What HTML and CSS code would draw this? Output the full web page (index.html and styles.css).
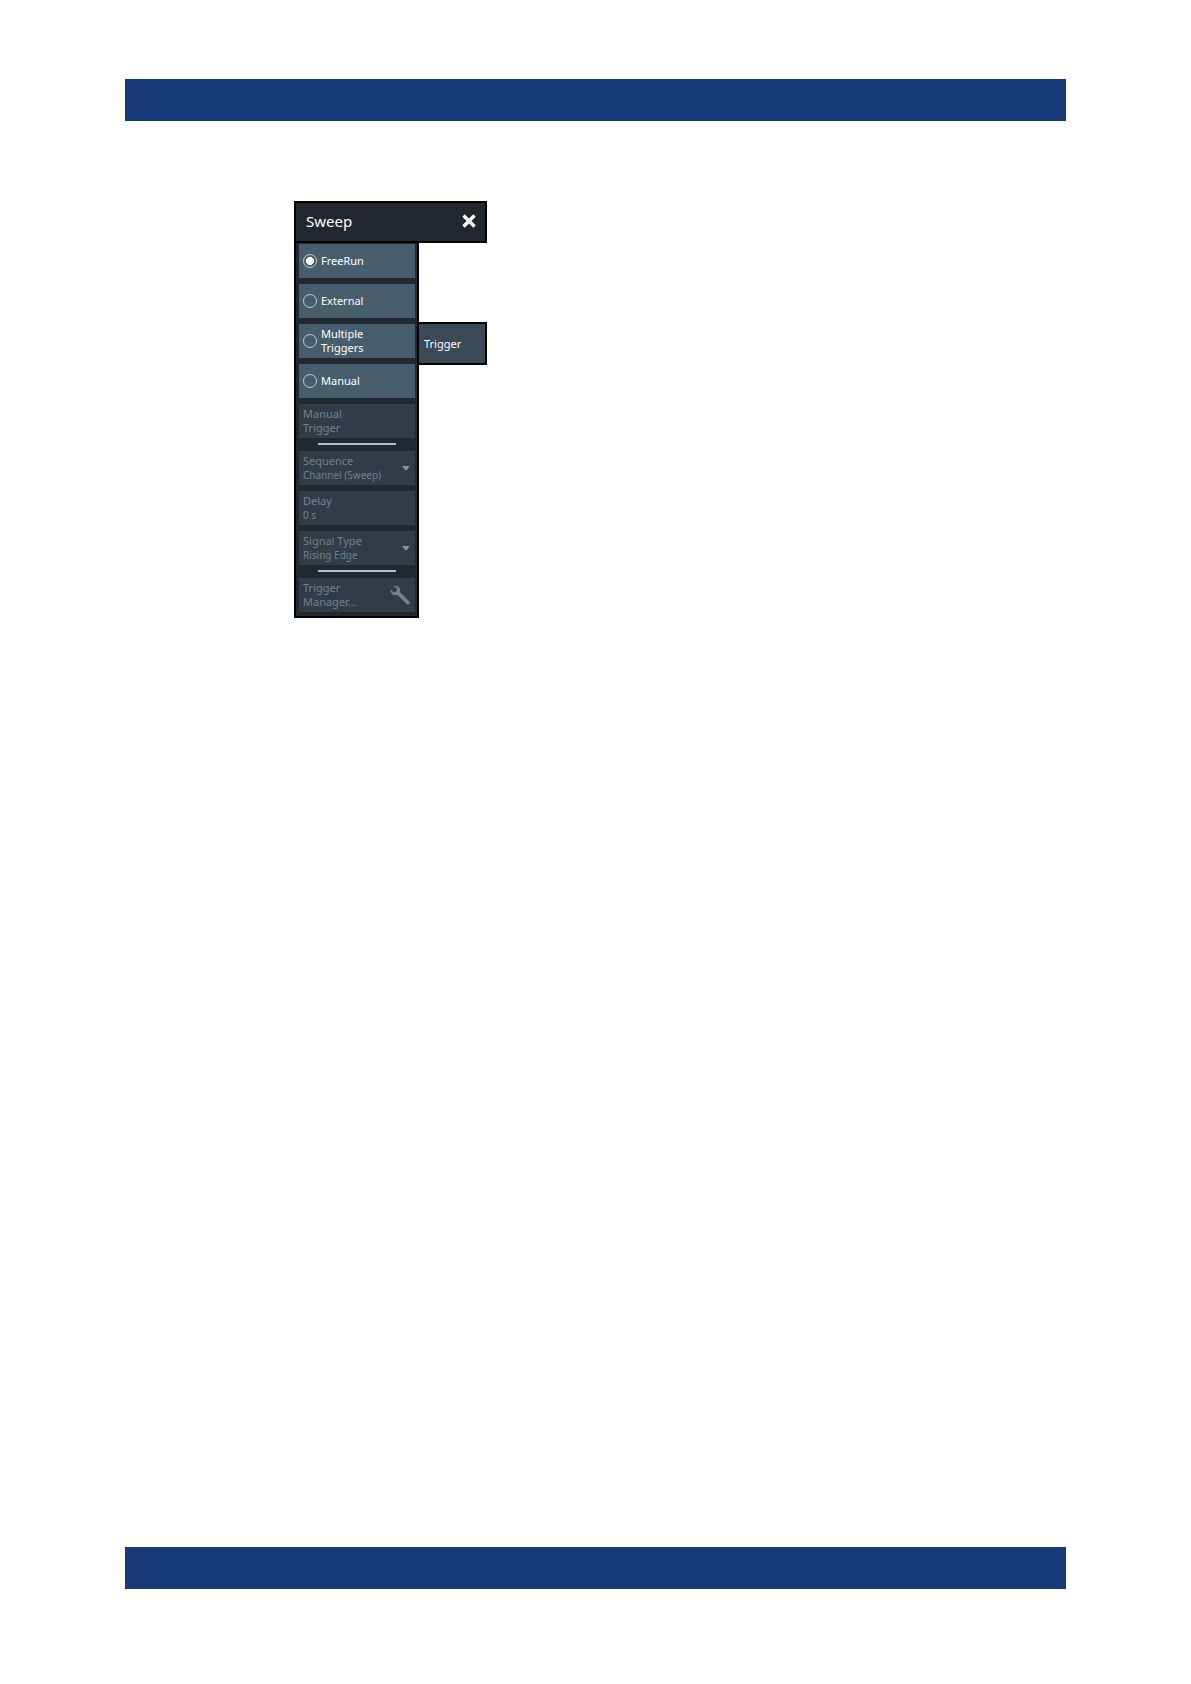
FILE: index.html
```html
<!DOCTYPE html>
<html lang="en">
  <head>
    <title>Sweep</title>
    <meta charset="UTF-8">
    <link rel="stylesheet" href="styles.css">
  </head>
  <body>
    <header class="band"></header>

    <main class="content">
      <section class="menu">
        <div class="menu-header">
          <h1>Sweep</h1>
          <button class="close" type="button" aria-label="Close">
            <svg width="14" height="14" viewBox="0 0 14 14">
              <path d="M1.5 1.5L12.5 12.5M12.5 1.5L1.5 12.5" stroke="#fff" stroke-width="3.4" fill="none"/>
            </svg>
          </button>
        </div>

        <form class="options">
          <label class="tile choice">
            <input type="radio" name="source" checked>
            <span>FreeRun</span>
          </label>
          <label class="tile choice">
            <input type="radio" name="source">
            <span>External</span>
          </label>
          <label class="tile choice">
            <input type="radio" name="source">
            <span>Multiple<br>Triggers</span>
          </label>
          <label class="tile choice">
            <input type="radio" name="source">
            <span>Manual</span>
          </label>

          <button class="tile" type="button" disabled>Manual<br>Trigger</button>

          <hr class="divider">

          <div class="tile">
            <div class="field">
              <label for="sequence">Sequence</label>
              <select id="sequence" disabled>
                <option>Channel (Sweep)</option>
              </select>
            </div>
            <svg class="arrow" width="8" height="5" viewBox="0 0 8 5">
              <path d="M0 0H8L4 5Z" fill="#82929e"/>
            </svg>
          </div>

          <div class="tile">
            <div class="field">
              <label for="delay">Delay</label>
              <input id="delay" type="text" value="0 s" disabled>
            </div>
          </div>

          <div class="tile">
            <div class="field">
              <label for="signal">Signal Type</label>
              <select id="signal" disabled>
                <option>Rising Edge</option>
              </select>
            </div>
            <svg class="arrow" width="8" height="5" viewBox="0 0 8 5">
              <path d="M0 0H8L4 5Z" fill="#82929e"/>
            </svg>
          </div>

          <hr class="divider">

          <button class="tile" type="button" disabled>
            <span>Trigger<br>Manager...</span>
            <svg width="20" height="20" viewBox="0 0 20 20">
              <path d="M3.6 1.2C6 0 9 1 9.900 3.700C10.300 5 10.200 6 9.900 7L19.300 16.600C20 17.400 19.800 18.500 19.200 19.100C18.500 19.800 17.400 19.800 16.700 19.200L7.400 9.700C5 10.400 2.300 9.700 1 7.400C0.500 6.500 0.300 5.400 0.500 4.400L2.600 6.500C3.800 7.500 5.600 7.300 6.500 6.200C7.300 5.100 7.100 3.900 6.200 3Z" fill="#6f8290"/>
            </svg>
          </button>
        </form>

        <button class="tab" type="button">Trigger</button>
      </section>
    </main>

    <footer class="band"></footer>
  </body>
</html>
```
FILE: styles.css
```css
* {
  box-sizing: border-box;
}

body {
  display: flex;
  flex-direction: column;
  min-height: 100vh;
  margin: 0;
  padding: 79px 125px 95px;
  background: #fff;
  font-family: "Noto Sans", sans-serif;
  font-size: 11px;
  line-height: 14px;
}

button,
input,
select {
  margin: 0;
  padding: 0;
  border: 0;
  background: none;
  font: inherit;
  color: inherit;
  text-align: left;
}

.band {
  height: 42px;
  background: #163a78;
}

.content {
  flex: 1;
  padding: 80px 0 0 169px;
}

/* header on top, options on the left, tab on the right */
.menu {
  display: inline-grid;
  grid-template-columns: 125px 68px;
}

.menu-header {
  grid-column: 1 / 3;
  display: flex;
  justify-content: space-between;
  align-items: center;
  height: 42px;
  padding: 0 9px 3px 10px;
  border: 2px solid #000;
  background: #20282d;
  color: #fff;
}

.menu-header h1 {
  margin: 0;
  font-size: 15px;
  line-height: 20px;
  font-weight: 400;
}

.close svg {
  display: block;
}

.options {
  display: flex;
  flex-direction: column;
  gap: 6px;
  padding: 1px 2px 4px 3px;
  border: 2px solid #000;
  border-top: 0;
  background: #1f292f;
}

.tile {
  display: flex;
  justify-content: space-between;
  align-items: center;
  height: 34px;
  padding: 0 5px 0 4px;
  background: #303d46;
  color: #6f8290;
}

.choice {
  justify-content: flex-start;
  gap: 4px;
  background: #485d6b;
  color: #fff;
}

.choice input {
  appearance: none;
  flex: none;
  width: 14px;
  height: 14px;
  padding: 2px;
  border: 1px solid #c3ced5;
  border-radius: 50%;
}

.choice input:checked {
  background: radial-gradient(circle, #fff 4px, transparent 4px);
}

.field {
  display: flex;
  flex-direction: column;
  flex: 1;
  min-width: 0;
}

.field input,
.field select {
  appearance: none;
  width: 100%;
  height: 14px;
  font-size: 10px;
  opacity: 1;
}

.divider {
  width: 78px;
  height: 2px;
  margin: -1px auto 0;
  border: 0;
  background: #b4c0c9;
}

.tab {
  align-self: start;
  height: 43px;
  margin-top: 79px;
  padding: 0 5px;
  border: 2px solid #000;
  border-left: 0;
  background: #394956;
  color: #fff;
}
```
